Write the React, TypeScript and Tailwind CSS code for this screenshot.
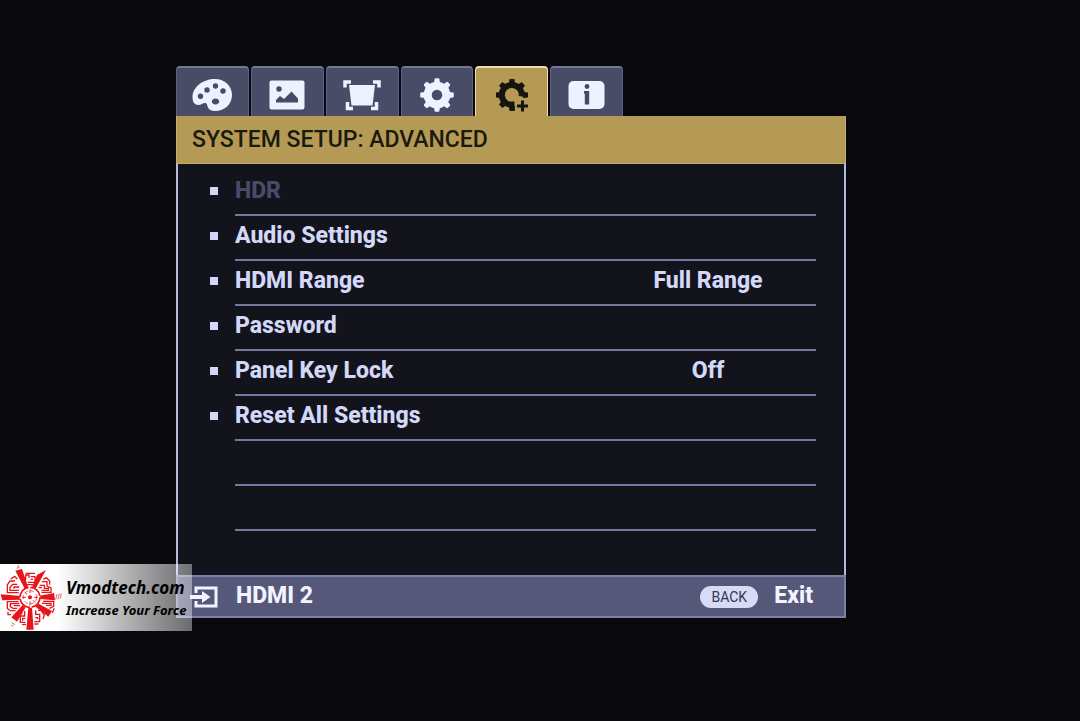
import { useState } from "react";
import type { ReactNode } from "react";

const teeth = [0, 45, 90, 135, 180, 225, 270, 315];

function PaletteIcon() {
  return (
    <svg viewBox="0 0 40 34" className="w-10 h-[34px]" fill="#eef1ff" aria-hidden="true">
      <path
        fillRule="evenodd"
        d="M23 1C11 1 .5 9 .5 19c0 5 2 8 6 8 3 0 4-2 6.500-2 2.500 0 2 2.500 3 4.500 1 2 3 3.500 7 3.500 10 0 17-7 17-16S33 1 23 1ZM8.500 15.500a2.700 2.700 0 1 1 0 5.400 2.700 2.700 0 0 1 0-5.400ZM15 9.300a2.700 2.700 0 1 1 0 5.400 2.700 2.700 0 0 1 0-5.400ZM23.500 5.300a2.700 2.700 0 1 1 0 5.400 2.700 2.700 0 0 1 0-5.400ZM31 10.300a2.700 2.700 0 1 1 0 5.400 2.700 2.700 0 0 1 0-5.400ZM23.500 20.500c2.100 0 3.700 1.400 3.700 3s-1.600 3-3.700 3-3.700-1.400-3.700-3 1.600-3 3.700-3Z"
      />
    </svg>
  );
}

function PictureIcon() {
  return (
    <svg viewBox="0 0 40 34" className="w-10 h-[34px]" aria-hidden="true">
      <rect x="2.500" y="2.500" width="35" height="29" rx="2" fill="#eef1ff" />
      <circle cx="12" cy="11" r="2.700" fill="#454a66" />
      <path d="M9 24.500v-2.500l4-4 4 3 7.500-7.500 6.500 7v4Z" fill="#454a66" />
    </svg>
  );
}

function DisplayIcon() {
  return (
    <svg viewBox="0 0 40 34" className="w-10 h-[34px]" aria-hidden="true">
      <path d="M7 7h26l-2.500 20.500h-21Z" fill="#eef1ff" />
      <path
        d="M3 9.500V4h6M31 4h6v5.500M34.500 24v6.500H29M11 30.500H5.500V24"
        fill="none"
        stroke="#eef1ff"
        strokeWidth="3.500"
      />
    </svg>
  );
}

function GearIcon() {
  return (
    <svg viewBox="0 0 40 34" className="w-10 h-[34px]" aria-hidden="true">
      <circle cx="20" cy="17" r="9.300" fill="none" stroke="#eef1ff" strokeWidth="8" />
      {teeth.map((angle) => (
        <path
          key={angle}
          d="M16.800 6 17.600 1q.2-.8 1-.8h2.800q.8 0 1 .8L23.200 6Z"
          fill="#eef1ff"
          transform={`rotate(${angle} 20 17)`}
        />
      ))}
    </svg>
  );
}

function GearPlusIcon() {
  return (
    <svg viewBox="0 0 40 34" className="w-10 h-[34px]" aria-hidden="true">
      <path
        d="M29.700 18.500A10 10 0 1 0 21.500 26.800"
        fill="none"
        stroke="#15150f"
        strokeWidth="6"
      />
      {teeth.filter((angle) => angle !== 135).map((angle) => (
        <path
          key={angle}
          d="M16.900 6 17.600 1h4.800L23.100 6Z"
          fill="#15150f"
          transform={`rotate(${angle} 20 17)`}
        />
      ))}
      <path d="M20 23.500h2.500v9.500H18V24Z" fill="#15150f" />
      <path d="M30.500 22.500v11M25 28h11" stroke="#15150f" strokeWidth="3" />
    </svg>
  );
}

function InfoIcon() {
  return (
    <svg viewBox="0 0 40 34" className="w-10 h-[34px]" aria-hidden="true">
      <rect x="1.500" y="3" width="36" height="28" rx="5" fill="#eef1ff" />
      <circle cx="20" cy="8.500" r="2.400" fill="#454a66" />
      <path d="M17 13h5.200v13.500h-4.400V15.500H17Z" fill="#454a66" />
    </svg>
  );
}

function InputIcon() {
  return (
    <svg viewBox="0 0 28 22" className="w-7 h-[22px]" aria-hidden="true">
      <path d="M6 7V2h20v18H6v-5" fill="none" stroke="#f2f3ff" strokeWidth="3" />
      <path d="M0 9h12V5l8.500 6-8.500 6v-4H0Z" fill="#f2f3ff" />
    </svg>
  );
}

function VmodtechLogo() {
  return (
    <svg viewBox="0 0 192 198" className="w-16 h-[66px] shrink-0" aria-hidden="true">
      <g fill="#e8141c">
        <path d="M111 30 138 15 105 74 95 70Z" />
        <path d="M46 17 66 12 85 68 75 73Z" />
        <path d="M2 88 62 93v11L7 106Z" />
        <path d="M34 157 68 120 77 127 51 170Z" />
        <path d="M85 128h11l5 66H79Z" />
        <path d="M105 124 113 115 156 138 145 155Z" />
        <path d="M119 92 162 84 165 106 119 102Z" />
      </g>
      <circle cx="90" cy="97" r="31" fill="white" />
      <circle cx="90" cy="97" r="6" fill="#e8141c" />
      <g fill="none" stroke="#e8141c" strokeWidth="4">
        <circle cx="90" cy="97" r="30" strokeWidth="5" strokeDasharray="42 5" />
        <circle cx="90" cy="97" r="20" strokeWidth="2" strokeDasharray="12 7" />
        <path d="M90 84V73M77 97H66M103 97h11M90 110v11M81 88l-7-7M99 106l7 7" strokeWidth="3" />
        <path d="M77 46V30h10v9M83 52h22V35H92M77 25h28M92 43h7M81 59h18" />
        <path d="M45 48H30l-8 12v23h34M52 58H38l-8 9v9h27M58 66H42v5M32 42l12-8 8 8" />
        <path d="M125 50h16v13l12 6v13h-29M119 61h14v9h12v6h-20M116 68h10M130 43l9-5 10 10v11" />
        <path d="M56 110H22v20l9 7h16M58 116H31v9l8 5h13M60 122H41M24 140v9h9" />
        <path d="M74 138v15H61v19h15M67 146H56v9M76 160h-8v7M66 179l12-1" />
        <path d="M107 136v12h12v22h-16M114 136h9l10 14-4 12M106 158h7v5M103 177h12" />
        <path d="M129 109h32v15l-13 6M126 115h27v6h-15M163 130l-6 13" />
        <path d="M50 10 59 6M51 4l6-2M171 87l-4 17M178 86l-4 17M184 85l-3 15M35 173l10 6M33 180l7 4" strokeWidth="2" />
      </g>
    </svg>
  );
}

const tabs: { label: string; icon: ReactNode }[] = [
  { label: "Display", icon: <PaletteIcon /> },
  { label: "Picture", icon: <PictureIcon /> },
  { label: "Keystone", icon: <DisplayIcon /> },
  { label: "System setup: basic", icon: <GearIcon /> },
  { label: "System setup: advanced", icon: <GearPlusIcon /> },
  { label: "Information", icon: <InfoIcon /> },
];

const items = [
  { label: "HDR", value: "", disabled: true },
  { label: "Audio Settings", value: "" },
  { label: "HDMI Range", value: "Full Range" },
  { label: "Password", value: "" },
  { label: "Panel Key Lock", value: "Off" },
  { label: "Reset All Settings", value: "" },
];

export default function App() {
  const [active, setActive] = useState(4);

  return (
    <div className="relative min-h-screen bg-[#09090d] pt-[66px] pl-[176px] pr-[234px] pb-16 font-['Roboto',sans-serif]">
      <main>
        {/* Tabs */}
        <div role="tablist" className="grid grid-cols-6 gap-0.5 w-[447px]">
          {tabs.map((tab, i) => (
            <button
              key={tab.label}
              role="tab"
              aria-label={tab.label}
              aria-selected={i === active}
              onClick={() => setActive(i)}
              className={
                i === active
                  ? "h-[50px] pt-1.5 flex items-center justify-center rounded-t-sm border-t-2 border-x border-[#f0dcae] bg-[#b59a56]"
                  : "h-[50px] pt-1.5 flex items-center justify-center rounded-t-sm border-t-2 border-x border-t-[#74799a] border-x-[#5f6484] bg-[#484c67]"
              }
            >
              {tab.icon}
            </button>
          ))}
        </div>

        {/* Title */}
        <h1 className="h-12 pt-0.5 pl-[15px] flex items-center border border-t-0 border-[#c8ae6c] bg-[#b59a56] text-[23px] font-medium text-[#1b1a10]">
          SYSTEM SETUP: ADVANCED
        </h1>

        {/* Menu */}
        <div className="h-[411px] pt-[7px] pl-8 pr-7 border-x-2 border-[#b4b9e2] bg-[#12131b]">
          <ul>
            {items.map((item) => (
              <li key={item.label} className="flex">
                <span className="w-[25px] pb-1.5 flex items-center" aria-hidden="true">
                  <span className="size-2 bg-[#d3d7f5]" />
                </span>
                <button
                  disabled={item.disabled}
                  className="grow h-[45px] pb-0.5 flex items-center justify-between border-b-2 border-[#7479a4] text-left text-[23px] font-extrabold text-[#d3d7f8] disabled:text-[#484a68]"
                >
                  <span>{item.label}</span>
                  <span className="w-[216px] text-center">{item.value}</span>
                </button>
              </li>
            ))}
          </ul>
          <div className="ml-[25px] h-[45px] border-b-2 border-[#7479a4]" />
          <div className="ml-[25px] h-[45px] border-b-2 border-[#7479a4]" />
        </div>

        {/* Source and exit */}
        <footer className="h-[43px] pl-3 pr-[31px] flex items-center justify-between border-2 border-[#7d81a8] bg-[#56587a] text-[23px] font-extrabold text-[#f2f3ff]">
          <div className="flex items-center gap-[18px]">
            <InputIcon />
            <span>HDMI 2</span>
          </div>
          <button className="flex items-center gap-4">
            <span className="w-[58px] h-[22px] flex items-center justify-center rounded-full bg-[#d8dbf5] text-sm font-normal text-[#35364f]">
              BACK
            </span>
            <span>Exit</span>
          </button>
        </footer>
      </main>

      {/* Watermark */}
      <div className="absolute left-0 top-[564px] w-48 h-[67px] flex items-center gap-0.5 bg-linear-to-r from-white from-30% to-white/40 font-['Noto_Sans',sans-serif] font-bold italic text-black">
        <VmodtechLogo />
        <div className="flex flex-col whitespace-nowrap">
          <p className="text-[17px] leading-6">Vmodtech.com</p>
          <p className="text-[13px] leading-5">Increase Your Force</p>
        </div>
      </div>
    </div>
  );
}
